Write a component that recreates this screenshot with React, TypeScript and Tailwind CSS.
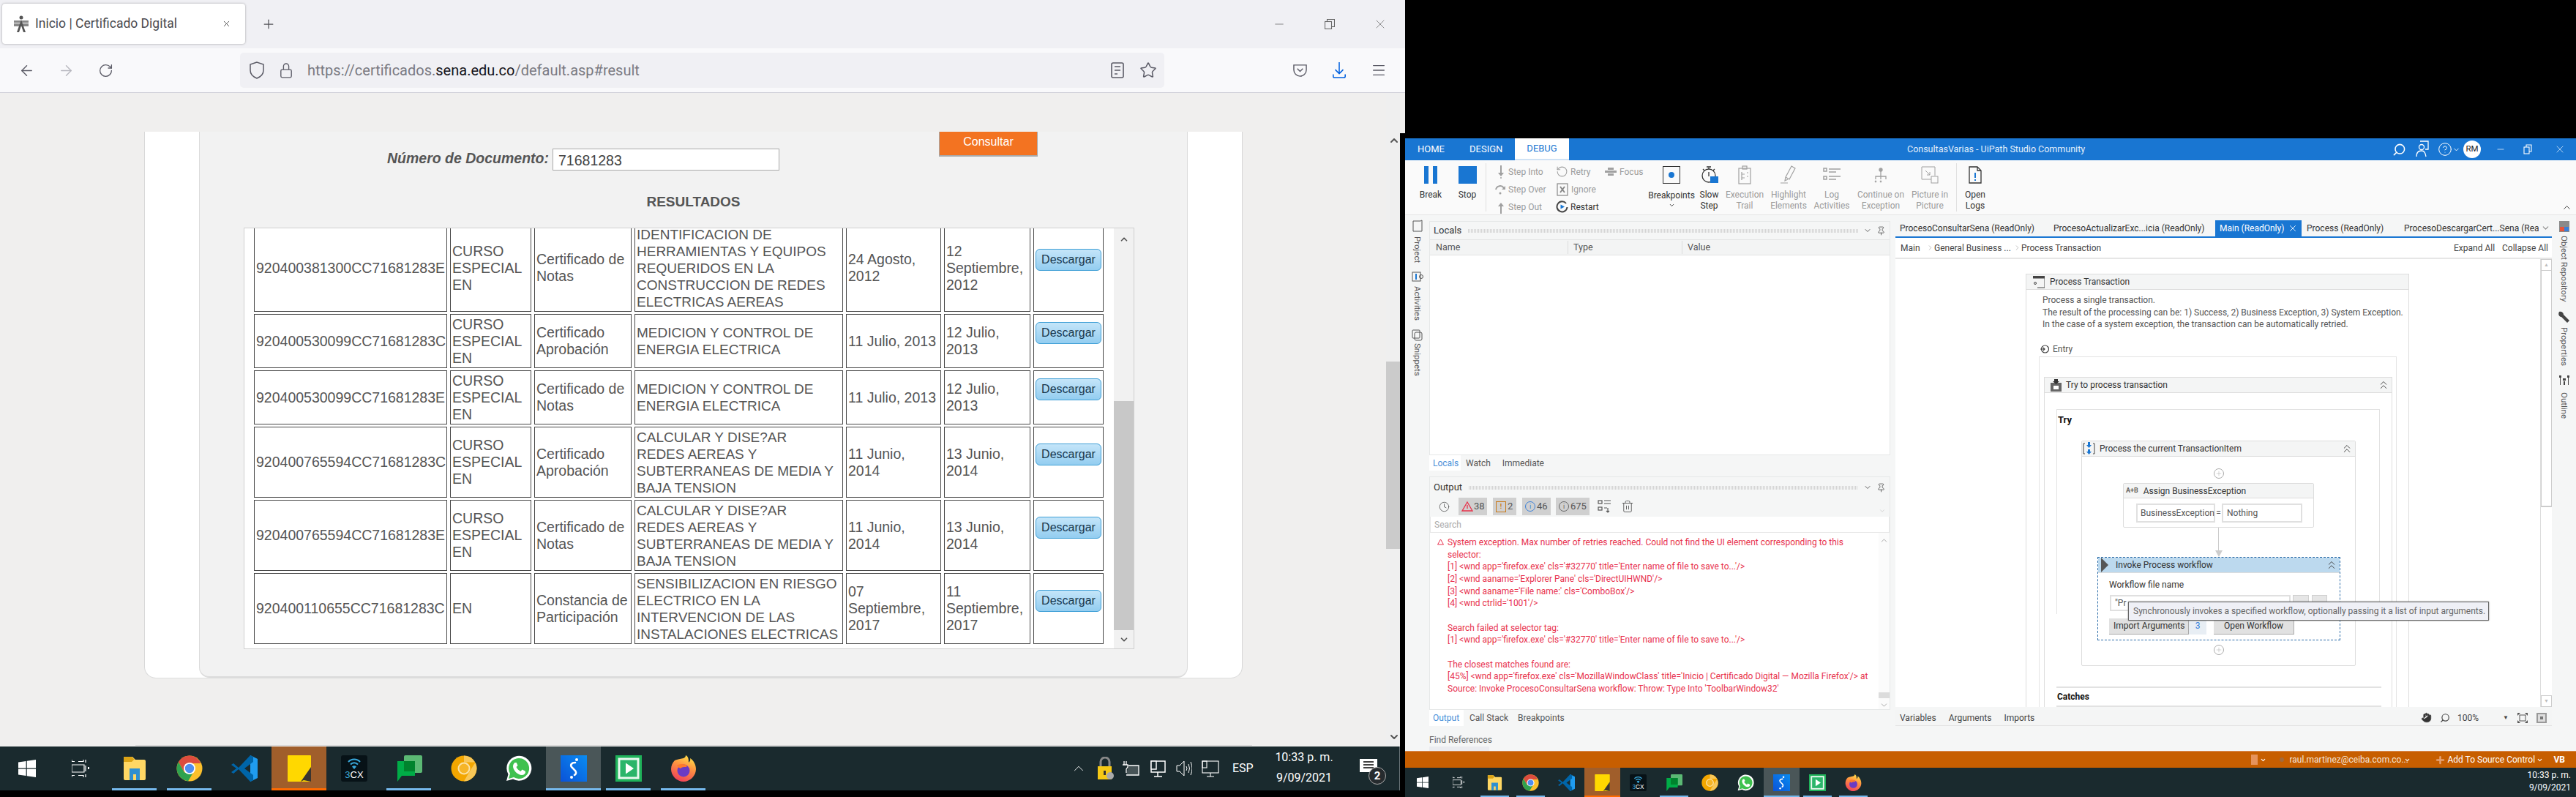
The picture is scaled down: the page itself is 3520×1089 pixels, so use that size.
import React from "react";
import { ChevronUp, ChevronDown, ArrowLeft, ArrowRight, RotateCw, Star, Plus, X, Minus, Menu, Search, HelpCircle, Clock, Trash2, Pin, Hand, ChevronRight, ChevronsUp } from "lucide-react";

/* ---------- task bar icons ---------- */
const Svg = ({ s, children }: { s: number; children: React.ReactNode }) => (
  <svg width={s} height={s} viewBox="0 0 36 36">{children}</svg>
);
const IWin = ({ s }: { s: number }) => (
  <svg width={s} height={s} viewBox="0 0 24 24" fill="#fff"><path d="M0 3.4 10.6 2v9.6H0zM11.8 1.8 24 0v11.6H11.8zM0 12.8h10.6V22L0 20.6zM11.8 12.8H24V24l-12.2-1.8z" /></svg>
);
const ITask = ({ s }: { s: number }) => (
  <svg width={s} height={s} viewBox="0 0 24 24" fill="none" stroke="#fff" strokeWidth="1.2"><path d="M0 2.5h4M9 2.5h7M19 0v4M0 7h17v10H0zM0 21.5h4M9 21.5h7M19 8v8M19 20v4M0 0v3M16 0v3M0 21v3M16 21v3" /><rect x="22" y="10" width="2" height="3" fill="#fff" stroke="none" /></svg>
);
const IFolder = ({ s }: { s: number }) => (
  <Svg s={s}><path d="M3 2h12l4 4H31q2 0 2 2v24q0 2-2 2H5q-2 0-2-2z" fill="#ffd764" /><path d="M3 2h11l4 4h-1l-3 3H3z" fill="#dca416" /><path d="M11 18h14v16h-5v-8h-4v8h-5z" fill="#2f8fd0" /></Svg>
);
const IChrome = ({ s, amber }: { s: number; amber?: boolean }) =>
  amber ? (
    <Svg s={s}><circle cx="18" cy="18" r="17.5" fill="#f3a600" /><path d="M18 .5a17.5 17.5 0 0 1 15 9H18zM33.5 10A17.5 17.5 0 0 1 18 35.5l8-14z" fill="#f8c757" /><circle cx="18" cy="18" r="7.5" fill="#f6b527" stroke="#fbe2a6" strokeWidth="2" /></Svg>
  ) : (
    <Svg s={s}><circle cx="18" cy="18" r="17.5" fill="#fbc02d" /><path d="M18 .5A17.5 17.5 0 0 0 2.9 9.3l7.5 13L18 11h15.2A17.5 17.5 0 0 0 18 .5z" fill="#dc4c3e" /><path d="M2.9 9.3A17.5 17.5 0 0 0 16 35.4l7-12H11z" fill="#2fa24f" /><circle cx="18" cy="18" r="8" fill="#fff" /><circle cx="18" cy="18" r="6.2" fill="#4f8ef0" /></Svg>
  );
const IVs = ({ s }: { s: number }) => (
  <Svg s={s}><path d="M26 0 36 5v26l-10 5V0z" fill="#1f9cf0" /><path d="M26 0 10 17 3 11 0 13l7 5-7 5 3 2 7-6 16 17 4-2V27l-12-9L30 9V2z" fill="#0065a9" /></Svg>
);
const ISticky = ({ s }: { s: number }) => (
  <Svg s={s}><rect x="2" width="32" height="36" fill="#ffd800" rx="1" /><path d="M34 16v20H20z" fill="#3a3530" /><path d="M34 36H20l4-2z" fill="#ffd800" /></Svg>
);
const I3cx = ({ s }: { s: number }) => (
  <Svg s={s}>
    <rect width="36" height="36" rx="3" fill="#071217" />
    <path d="M10 9a11 11 0 0 1 16 0M13 12.500a6.500 6.500 0 0 1 10 0" fill="none" stroke="#39a9dc" strokeWidth="2" />
    <path d="M15 15.500 18 19l3-3.500a4 4 0 0 0-6 0z" fill="#39a9dc" />
    <text x="18" y="31" fontSize="13" textAnchor="middle" fill="#fff" fontFamily="Liberation Sans"><tspan fill="#39a9dc">3</tspan>CX</text>
  </Svg>
);
const IChat = ({ s }: { s: number }) => (
  <Svg s={s}><rect x="11" width="25" height="24" rx="2" fill="#5bb974" /><path d="M2 8h24v20H8l-6 8z" fill="#00ac47" /><rect x="11" y="8" width="15" height="14" fill="#00832d" /></Svg>
);
const IWa = ({ s }: { s: number }) => (
  <Svg s={s}><path d="M1 35l2.500-9A17 17 0 1 1 10 32.500z" fill="#fff" /><path d="M4 32l2-7A14 14 0 1 1 11 30z" fill="#3fc14f" /><path d="M13 10c-1 0-3 2-3 5 0 5 6 12 12 12 3 0 5-2 5-4l-.5-1.500-4-2-2 2.500c-2-.7-5-3.500-6-6l2-2-1.800-4z" fill="#fff" /></Svg>
);
const IUi = ({ s }: { s: number }) => (
  <Svg s={s}>
    <defs><linearGradient id="ug" x1="0" y1="1" x2="1" y2="0"><stop offset="0" stopColor="#0a52d8" /><stop offset="1" stopColor="#0a8cf0" /></linearGradient></defs>
    <rect width="36" height="36" fill="url(#ug)" />
    <path d="M20 10c-5 0-7 3-5 6l5 5c2 3 1 5-1 6" fill="none" stroke="#fff" strokeWidth="2.600" strokeLinecap="round" />
    <circle cx="22" cy="6" r="2" fill="#fff" /><circle cx="15" cy="30" r="2" fill="#fff" />
  </Svg>
);
const IPlay = ({ s }: { s: number }) => (
  <Svg s={s}><rect width="36" height="36" fill="#1fb25a" /><rect x="3.500" y="3.500" width="29" height="29" fill="#e9f8ef" /><rect x="6.500" y="6.500" width="23" height="23" fill="#2bb56a" /><path d="M14 10.500 25 18l-11 7.500z" fill="#fff" /></Svg>
);
const IFox = ({ s }: { s: number }) => (
  <svg width={s} height={s} viewBox="0 0 36 36">
    <defs><linearGradient id="fx" x1="0.700" y1="0" x2="0.300" y2="1"><stop offset="0" stopColor="#ffe24a" /><stop offset="0.400" stopColor="#ff9640" /><stop offset="1" stopColor="#f03e5a" /></linearGradient></defs>
    <path d="M18 4C13 5 8 6 6 7 3 10 1 14 1 19c0 9 8 17 17 17s17-8 17-17c0-6-3-12-8-15 1 3-1 5-2 6 0-4 0-8-4-10 0 2-1 3-3 4z" fill="url(#fx)" />
    <circle cx="18" cy="21" r="8.500" fill="#6b3bc4" />
    <path d="M9 14c3-2 7-3 12-1 2 1 2 3 0 3-3 0-5 0-7 2-2-1-4-2-5-4z" fill="#ff7a2a" />
  </svg>
);

type Tile = { k: string; I: React.FC<{ s: number }>; bar?: boolean; bg?: string; hot?: boolean };
const tiles: Tile[] = [
  { k: "folder", I: IFolder, bar: true },
  { k: "chrome", I: ({ s }) => <IChrome s={s} />, bar: true },
  { k: "vs", I: IVs },
  { k: "sticky", I: ISticky, hot: true },
  { k: "3cx", I: I3cx },
  { k: "chat", I: IChat, bar: true },
  { k: "amber", I: ({ s }) => <IChrome s={s} amber /> },
  { k: "wa", I: IWa },
  { k: "ui", I: IUi, bar: true, bg: "bg-[#4a5658]" },
  { k: "play", I: IPlay, bar: true },
  { k: "fox", I: IFox, bar: true },
];

/* ---------- browser ---------- */
const rows = [
  { h: "h-[120px]", id: "920400381300CC71681283E", a: ["CURSO", "ESPECIAL", "EN"], b: ["Certificado de", "Notas"], c: ["IDENTIFICACION DE", "HERRAMIENTAS Y EQUIPOS", "REQUERIDOS EN LA", "CONSTRUCCION DE REDES", "ELECTRICAS AEREAS"], d: ["24 Agosto,", "2012"], e: ["12", "Septiembre,", "2012"] },
  { h: "h-[74px]", id: "920400530099CC71681283C", a: ["CURSO", "ESPECIAL", "EN"], b: ["Certificado", "Aprobación"], c: ["MEDICION Y CONTROL DE", "ENERGIA ELECTRICA"], d: ["11 Julio, 2013"], e: ["12 Julio,", "2013"] },
  { h: "h-[74px]", id: "920400530099CC71681283E", a: ["CURSO", "ESPECIAL", "EN"], b: ["Certificado de", "Notas"], c: ["MEDICION Y CONTROL DE", "ENERGIA ELECTRICA"], d: ["11 Julio, 2013"], e: ["12 Julio,", "2013"] },
  { h: "h-[97px]", id: "920400765594CC71681283C", a: ["CURSO", "ESPECIAL", "EN"], b: ["Certificado", "Aprobación"], c: ["CALCULAR Y DISE?AR", "REDES AEREAS Y", "SUBTERRANEAS DE MEDIA Y", "BAJA TENSION"], d: ["11 Junio,", "2014"], e: ["13 Junio,", "2014"] },
  { h: "h-[97px]", id: "920400765594CC71681283E", a: ["CURSO", "ESPECIAL", "EN"], b: ["Certificado de", "Notas"], c: ["CALCULAR Y DISE?AR", "REDES AEREAS Y", "SUBTERRANEAS DE MEDIA Y", "BAJA TENSION"], d: ["11 Junio,", "2014"], e: ["13 Junio,", "2014"] },
  { h: "h-[97px]", id: "920400110655CC71681283C", a: ["EN"], b: ["Constancia de", "Participación"], c: ["SENSIBILIZACION EN RIESGO", "ELECTRICO EN LA", "INTERVENCION DE LAS", "INSTALACIONES ELECTRICAS"], d: ["07", "Septiembre,", "2017"], e: ["11", "Septiembre,", "2017"] },
];

const Cell = ({ l, cls }: { l: string[]; cls?: string }) => (
  <td className={`border border-[#484848] px-[2px] py-0 align-middle whitespace-nowrap overflow-hidden ${cls || ""}`}>
    {l.map((t, i) => (<div key={i}>{t}</div>))}
  </td>
);

function Browser() {
  return (
    <div className="w-[1920px] flex flex-col shrink-0 font-['Roboto',sans-serif]">
      <div className="h-[66px] bg-[#f0f0f4] flex items-start">
        <div className="ml-[3px] mt-[5px] w-[332px] h-[55px] bg-white rounded-[4px] shadow-[0_0_3px_rgba(0,0,0,0.35)] flex items-center text-[#4a4a4f] text-[17.500px]">
          <svg className="ml-[14px] mr-[7px]" width="24" height="24" viewBox="0 0 24 24" fill="#555"><circle cx="12" cy="3" r="2.500" /><path d="M2 7h20v3H2zM2 11h20v4H2z" opacity=".7" /><path d="M12 6 6 23h3l3-9 3 9h3z" /></svg>
          <span className="whitespace-nowrap">Inicio | Certificado Digital</span>
          <X className="ml-auto mr-[19px] text-[#333]" size={13} strokeWidth={1.500} />
        </div>
        <div className="w-[64px] h-[66px] flex items-center justify-center text-[#55555a]"><Plus size={20} strokeWidth={1.500} /></div>
        <div className="ml-auto flex text-[#666]">
          <div className="w-[69px] h-[66px] flex items-center justify-center"><Minus size={18} strokeWidth={1} /></div>
          <div className="w-[69px] h-[66px] flex items-center justify-center">
            <svg width="14" height="14" viewBox="0 0 14 14" fill="none" stroke="#666" strokeWidth="1.100"><rect x="0.500" y="3.500" width="9" height="10" /><path d="M3.500 3.500v-3h10v10h-4" /></svg>
          </div>
          <div className="w-[69px] h-[66px] flex items-center justify-center"><X size={20} strokeWidth={0.900} /></div>
        </div>
      </div>
      <div className="h-[61px] bg-[#f9f9fb] border-b border-[#cfcfd8] flex items-center pl-[9px] text-[#5b5b66]">
        <div className="w-[54px] flex justify-center"><ArrowLeft size={23} strokeWidth={1.500} /></div>
        <div className="w-[54px] flex justify-center text-[#b8b8bf]"><ArrowRight size={23} strokeWidth={1.500} /></div>
        <div className="w-[54px] flex justify-center"><RotateCw size={21} strokeWidth={1.500} /></div>
        <div className="ml-[157px] w-[1263px] h-[48px] bg-[#f0f0f4] rounded-[5px] flex items-center">
          <svg className="ml-[12px]" width="22" height="24" viewBox="0 0 22 24" fill="none" stroke="#5b5b66" strokeWidth="1.500"><path d="M11 1 2 4v8c0 5 4 9 9 11 5-2 9-6 9-11V4z" /></svg>
          <svg className="ml-[20px]" width="18" height="24" viewBox="0 0 20 24" fill="none" stroke="#5b5b66" strokeWidth="1.500"><path d="M6 11V6a4 4 0 0 1 8 0v5" /><rect x="2" y="11" width="16" height="12" rx="2" /></svg>
          <span className="ml-[20px] text-[20px] text-[#7a7a82] whitespace-nowrap">https://certificados.<span className="text-[#15141a]">sena.edu.co</span>/default.asp#result</span>
          <svg className="ml-auto" width="18" height="22" viewBox="0 0 18 22" fill="none" stroke="#5b5b66" strokeWidth="1.600"><rect x="1" y="1" width="16" height="20" rx="2" /><path d="M5 6h8M5 11h8M5 16h4" /></svg>
          <Star className="ml-[21px] mr-[10px]" size={24} strokeWidth={1.500} />
        </div>
        <div className="ml-[158px] w-[54px] flex justify-center">
          <svg width="21" height="19" viewBox="0 0 22 20" fill="none" stroke="#5b5b66" strokeWidth="1.500"><path d="M2 2h18v7a9 9 0 0 1-18 0z" /><path d="m7 7 4 4 4-4" /></svg>
        </div>
        <div className="w-[54px] flex justify-center">
          <svg width="20" height="24" viewBox="0 0 22 26" fill="none" stroke="#0060df" strokeWidth="1.700"><path d="M11 1v17M5 12l6 6 6-6M2 19v3a2 2 0 0 0 2 2h14a2 2 0 0 0 2-2v-3" /></svg>
        </div>
        <div className="w-[54px] flex justify-center"><Menu size={22} strokeWidth={1.500} /></div>
      </div>
      <div className="h-[893px] bg-[#f0efee] flex">
        <div className="w-[1894px] shrink-0 font-['Liberation_Sans',sans-serif] text-[19.500px] leading-[23px] text-[#555]">
          <div className="mt-[53px] ml-[197px] w-[1501px] h-[747px] bg-white rounded-b-[16px] border-b border-[#ddd] px-[74px] border-x border-x-[#d8d8d8]">
            <div className="h-[746px] bg-[#f2f2f2] rounded-b-[14px] border-x border-b-2 border-[#dcdcdc]">
              <div className="flex items-start pl-[256px] h-[53px]">
                <span className="mt-[25px] w-[220px] font-bold italic whitespace-nowrap">Número de Documento:</span>
                <div className="ml-[6px] mt-[23px] w-[310px] h-[30px] bg-white border border-[#aaa] pl-[7px] leading-[30px] text-[#444]">71681283</div>
                <div className="ml-[218px] w-[135px] h-[34px] bg-[#f37321] border-b-2 border-r border-l border-[#a9a9a9] border-t-0 text-white text-center text-[16px] leading-[28px]">Consultar</div>
              </div>
              <div className="mt-[32px] text-center font-bold text-[19px] leading-[22px]">RESULTADOS</div>
              <div className="mt-[24px] ml-[60px] w-[1217px] h-[576px] bg-white border border-[#d0d0d0] flex overflow-hidden">
                <div className="w-[1188px] pl-[9px] overflow-hidden shrink-0">
                  <table className="w-[1169px] table-fixed border-separate [border-spacing:4px_3px] -mt-[9px]">
                    <colgroup>
                      <col className="w-[264px]" /><col className="w-[111px]" /><col className="w-[133px]" /><col className="w-[285px]" /><col className="w-[130px]" /><col className="w-[118px]" /><col className="w-[96px]" />
                    </colgroup>
                    <tbody>
                      {rows.map((r, i) => (
                        <tr key={i} className={r.h}>
                          <Cell l={[r.id]} /><Cell l={r.a} /><Cell l={r.b} /><Cell l={r.c} cls="text-[19px]" /><Cell l={r.d} /><Cell l={r.e} />
                          <td className="border border-[#484848] p-0 align-middle">
                            <div className="mx-auto mb-[22px] w-[90px] h-[30px] rounded-[6px] border border-[#3f9fd6] bg-gradient-to-b from-[#c4e5f9] to-[#93cdf0] text-[#17384f] text-[16px] leading-[28px] text-center">Descargar</div>
                          </td>
                        </tr>
                      ))}
                    </tbody>
                  </table>
                </div>
                <div className="w-[28px] bg-[#f1f1f1] flex flex-col items-center shrink-0 text-[#555]">
                  <ChevronUp className="mt-[8px] shrink-0" size={14} strokeWidth={3} />
                  <div className="mt-[214px] w-full h-[313px] bg-[#c8c8c8] shrink-0" />
                  <ChevronDown className="mt-[6px] shrink-0" size={14} strokeWidth={3} />
                </div>
              </div>
            </div>
          </div>
          <div className="mt-[91px] ml-[185px] w-[1526px] border-t border-[#d5d5d5]" />
        </div>
        <div className="w-[19px] bg-[#efefef] flex flex-col items-end shrink-0 text-[#555]">
          <ChevronUp className="mt-[57px] shrink-0" size={16} strokeWidth={3} />
          <div className="mt-[294px] w-full h-[256px] bg-[#cbcbcb] shrink-0" />
          <ChevronDown className="mt-[249px] shrink-0" size={16} strokeWidth={3} />
        </div>
        <div className="mt-[55px] w-[7px] bg-black" />
      </div>
      <div className="flex h-[60px] w-[1913px] bg-[#1a2a2e] border-r border-[#6a7478]">
        <div className="w-[73px] flex items-center justify-center"><IWin s={24} /></div>
        <div className="w-[73px] flex items-center justify-center"><ITask s={24} /></div>
        {tiles.map((t) => (
          <div key={t.k} className={`relative w-[75px] flex items-center justify-center ${t.hot ? "bg-[#a05e2b]" : t.bg || ""}`}>
            <t.I s={36} />
            {t.bar && <div className={`absolute bottom-0 h-[3px] bg-[#76b9ed] ${t.bg ? "inset-x-0" : "inset-x-[7px]"}`} />}
            {t.hot && <div className="absolute inset-x-0 bottom-0 h-[3px] bg-[#ff6a00]" />}
          </div>
        ))}
        <div className="ml-auto flex items-center text-white font-['Roboto',sans-serif]">
          <ChevronUp size={22} strokeWidth={1} />
          <svg className="ml-[14px]" width="23" height="32" viewBox="0 0 23 32"><path d="M5 14V7a6 6 0 0 1 12 0v7" fill="none" stroke="#888" strokeWidth="3" /><rect x="1" y="13" width="19" height="18" fill="#f6c915" /><rect x="9" y="19" width="3" height="6" fill="#333" /><circle cx="18" cy="26" r="5" fill="#aaa" /></svg>
          <svg className="ml-[12px]" width="24" height="20" viewBox="0 0 24 20" fill="none" stroke="#fff" strokeWidth="1.300"><path d="M2 0v5M5 0v5M0 5h7v3l-2 3v5" /><path d="M8 6h14v13H5" fill="#fff" fillOpacity=".2" /></svg>
          <svg className="ml-[14px]" width="21" height="26" viewBox="0 0 21 26" fill="none" stroke="#fff" strokeWidth="1.500"><rect x="1" y="3" width="19" height="15" /><rect x="1" y="3" width="7" height="11" fill="#1a2a2e" /><path d="M10 18v6M5 24h11" /></svg>
          <svg className="ml-[14px]" width="22" height="24" viewBox="0 0 22 24" fill="none" stroke="#fff" strokeWidth="1"><path d="M1 8h4l6-6v20l-6-6H1zM14 9q2 3 0 6M17 6q3 6 0 12M20 3q4 9 0 18" /></svg>
          <svg className="ml-[13px]" width="24" height="24" viewBox="0 0 24 24" fill="none" stroke="#fff" strokeWidth="1.100"><rect x="1" y="2" width="22" height="16" /><rect x="1" y="2" width="6" height="9" /><path d="M12 18v5M7 23h10" /></svg>
          <span className="ml-[18px] text-[16px] w-[48px]">ESP</span>
          <div className="w-[100px] text-[16px] text-center leading-[28px] mt-[-2px]"><div>10:33 p. m.</div><div>9/09/2021</div></div>
          <div className="relative ml-[26px] mr-[30px] w-[24px] h-[18px] bg-white mt-[-8px]">
            <div className="mx-[5px] mt-[3px] h-[1.500px] bg-[#444]" /><div className="mx-[5px] mt-[2.500px] h-[1.500px] bg-[#444]" /><div className="mx-[5px] mt-[2.500px] h-[1.500px] bg-[#444]" />
            <div className="absolute left-[12px] top-[11px] w-[24px] h-[24px] rounded-full bg-[#262b2e] border border-[#aaa] text-white text-[15px] font-bold text-center leading-[22px]">2</div>
          </div>
        </div>
      </div>
    </div>
  );
}

/* ---------- UiPath ---------- */
const RBtn = ({ w, icon, lines, off, shift }: { w: string; icon: React.ReactNode; lines: string[]; off?: boolean; shift?: boolean }) => (
  <div className={`${w} shrink-0 flex flex-col items-center pt-[8px] text-center leading-[15px] whitespace-nowrap ${off ? "text-[#9a9a9a]" : "text-[#333]"}`}>
    <div className="h-[24px] flex items-center justify-center">{icon}</div>
    <div className={shift ? "mt-[9px]" : "mt-[8px]"}>{lines.map((l) => (<div key={l}>{l}</div>))}</div>
    {shift && <ChevronDown className="mt-[1px] text-[#333]" size={9} strokeWidth={2.500} />}
  </div>
);
const G = "#a0a0a0";
const StepRow = ({ icon, label, off = true, cls }: { icon: React.ReactNode; label: string; off?: boolean; cls: string }) => (
  <div className={`${cls} h-[24px] flex items-center whitespace-nowrap ${off ? "text-[#9a9a9a]" : "text-[#333]"}`}>{icon}{label}</div>
);
const Grip = () => (
  <div className="flex-1 h-[5px] bg-[repeating-linear-gradient(90deg,#d4d4d4_0,#d4d4d4_1px,transparent_1px,transparent_2px)]" />
);
const logLines = [
  "System exception. Max number of retries reached. Could not find the UI element corresponding to this",
  "selector:",
  "[1] <wnd app='firefox.exe' cls='#32770' title='Enter name of file to save to...'/>",
  "[2] <wnd aaname='Explorer Pane' cls='DirectUIHWND'/>",
  "[3] <wnd aaname='File name:' cls='ComboBox'/>",
  "[4] <wnd ctrlid='1001'/>",
  "\u00a0",
  "Search failed at selector tag:",
  "[1] <wnd app='firefox.exe' cls='#32770' title='Enter name of file to save to...'/>",
  "\u00a0",
  "The closest matches found are:",
  "[45%] <wnd app='firefox.exe' cls='MozillaWindowClass' title='Inicio | Certificado Digital — Mozilla Firefox'/> at",
  "Source: Invoke ProcesoConsultarSena workflow: Throw: Type Into 'ToolbarWindow32'",
];
const Head = ({ cls, bg, icon, t, chev = true }: { cls?: string; bg?: string; icon: React.ReactNode; t: string; chev?: boolean }) => (
  <div className={`flex items-center h-[21px] border-b border-[#ddd] ${bg || "bg-[#f4f5f5]"} ${cls || ""} text-[#333]`}>
    {icon}<span className="whitespace-nowrap">{t}</span>
    {chev && <ChevronsUp className="ml-auto mr-[2px] text-[#444]" size={18} strokeWidth={1.300} />}
  </div>
);
const PlusC = () => (
  <div className="mx-auto w-[14px] h-[14px] rounded-full border border-[#aaa] flex items-center justify-center text-[#999]"><Plus size={10} strokeWidth={1} /></div>
);
const DocTab = ({ w, t, cls }: { w: string; t: string; cls?: string }) => (
  <div className={`${w} h-[22px] flex items-center overflow-hidden whitespace-nowrap text-[#333] ${cls || ""}`}>{t}</div>
);
const Vert = ({ t, cls }: { t: string; cls?: string }) => (
  <div className={`[writing-mode:vertical-rl] whitespace-nowrap text-[#555] text-[11.500px] leading-[14px] ${cls || ""}`}>{t}</div>
);

function Studio() {
  return (
    <div className="w-[1600px] shrink-0 flex flex-col pt-[189px] font-['Roboto',sans-serif] text-[12px]">
      <div className="h-[30px] bg-[#1976d2] flex text-white text-[13px] items-stretch shrink-0">
        <div className="w-[88px] pl-[17px] flex items-center">HOME</div>
        <div className="w-[62px] flex items-center">DESIGN</div>
        <div className="w-[74px] bg-white text-[#1976d2] flex items-center justify-center border-b-2 border-[#cfe2f5]">DEBUG</div>
        <div className="ml-[462px] flex items-center text-[#e3eefa] whitespace-nowrap text-[12.500px]">ConsultasVarias - UiPath Studio Community</div>
        <div className="ml-auto flex items-center">
          <Search size={19} strokeWidth={2} className="-scale-x-100 mr-[13px]" />
          <svg className="mr-[12px]" width="18" height="24" viewBox="0 0 18 24" fill="none" stroke="#fff" strokeWidth="1.300"><path d="M6 1h11v11h-4" /><circle cx="8" cy="9" r="3.500" /><path d="M1 22c0-6 3-8 7-8s5 3 6 8" /></svg>
          <HelpCircle size={20} strokeWidth={1.200} />
          <ChevronDown size={11} strokeWidth={2} className="mr-[4px]" />
          <div className="w-[24px] h-[24px] rounded-full bg-white text-[#222] text-[11.500px] flex items-center justify-center">RM</div>
          <Minus className="ml-[20px]" size={14} strokeWidth={1.200} />
          <svg className="ml-[24px]" width="12" height="14" viewBox="0 0 12 14" fill="none" stroke="#fff" strokeWidth="1.100"><rect x="1" y="4" width="7" height="9" /><path d="M4 4V1h7v9H8" /></svg>
          <X className="ml-[30px] mr-[14px]" size={16} strokeWidth={1} />
        </div>
      </div>
      {/* ribbon */}
      <div className="h-[75px] bg-[#fafafa] flex items-stretch shrink-0 border-b border-[#e6e6e6] relative">
        <RBtn w="w-[70px]" lines={["Break"]} icon={<div className="flex gap-[6px]"><div className="w-[6px] h-[24px] bg-[#1976d2]" /><div className="w-[6px] h-[24px] bg-[#1976d2]" /></div>} />
        <RBtn w="w-[30px]" lines={["Stop"]} icon={<div className="w-[25px] h-[24px] bg-[#1976d2]" />} />
        <div className="ml-[10px] my-[4px] border-l border-[#e0e0e0] pl-[12px] w-[223px] grid grid-cols-[84px_66px_auto] content-center pt-[5px]">
          <StepRow cls="" label="Step Into" icon={<svg className="mr-[6px] ml-[4px]" width="8" height="18" viewBox="0 0 8 18" fill={G}><path d="M3 0h2v10h3l-4 5-4-5h3z" /><circle cx="4" cy="17" r="1" /></svg>} />
          <StepRow cls="" label="Retry" icon={<RotateCw className="mr-[3px] -scale-x-100 -ml-[1px]" size={17} strokeWidth={1.500} color={G} />} />
          <StepRow cls="" label="Focus" icon={<svg className="mr-[4px]" width="16" height="12" viewBox="0 0 16 12" fill={G}><rect x="4" width="8" height="3" /><rect y="4" width="16" height="3" /><rect x="4" y="8" width="8" height="3" /></svg>} />
          <StepRow cls="" label="Step Over" icon={<svg className="mr-[3px] -ml-[1px]" width="16" height="16" viewBox="0 0 16 16" fill="none" stroke={G} strokeWidth="2"><path d="M2 8a6 6 0 0 1 11-2" /><path d="M15 3v5h-5z" fill={G} stroke="none" /><circle cx="8" cy="13" r="1.500" fill={G} stroke="none" /></svg>} />
          <StepRow cls="col-span-2" label="Ignore" icon={<svg className="mr-[4px]" width="16" height="22" viewBox="0 0 16 22" fill="none" stroke="#888" strokeWidth="1.200"><rect x="1" y="3" width="14" height="16" /><path d="m5 7 6 8M11 7l-6 8" strokeWidth="2" /></svg>} />
          <StepRow cls="" label="Step Out" icon={<svg className="mr-[6px] ml-[4px]" width="8" height="18" viewBox="0 0 8 18" fill={G}><path d="M3 18h2V8h3L4 3 0 8h3z" /></svg>} />
          <StepRow cls="col-span-2" off={false} label="Restart" icon={<svg className="mr-[3px] -ml-[1px]" width="17" height="17" viewBox="0 0 17 17" fill="none" stroke="#444" strokeWidth="2"><path d="M14 4a7 7 0 1 0 1.500 5" /><path d="M6.500 5.500 12 8.500 6.500 11.500z" fill="#1976d2" stroke="none" /></svg>} />
        </div>
        <RBtn w="w-[62px]" shift lines={["Breakpoints"]} icon={<div className="w-[24px] h-[24px] border border-[#333] flex items-center justify-center"><div className="w-[8px] h-[8px] rounded-full bg-[#1976d2]" /></div>} />
        <RBtn w="w-[41px]" lines={["Slow", "Step"]} icon={<svg width="24" height="26" viewBox="0 0 24 26" fill="none" stroke="#333" strokeWidth="1.300"><circle cx="11" cy="14" r="9" /><path d="M8 2h6M11 3v2M3 5l2 2M19 5l-2 2M11 9v6" /><rect x="13" y="15" width="11" height="9" fill="#1976d2" stroke="none" /></svg>} />
        <RBtn w="w-[56px]" off lines={["Execution", "Trail"]} icon={<svg width="18" height="26" viewBox="0 0 18 26" fill="none" stroke={G} strokeWidth="1.200"><rect x="1" y="4" width="16" height="21" /><rect x="6" y="1" width="6" height="4" /><path d="M5 9v11M5 12h4M5 17h4M12 10h2M12 15h2" /></svg>} />
        <RBtn w="w-[64px]" off lines={["Highlight", "Elements"]} icon={<svg width="24" height="26" viewBox="0 0 24 26" fill="none" stroke={G} strokeWidth="1.200"><path d="M16 1l5 3-8 15-5-3zM8 16l-1 5 4-2M1 24h10" /></svg>} />
        <RBtn w="w-[54px]" off lines={["Log", "Activities"]} icon={<svg width="24" height="20" viewBox="0 0 24 20" fill="none" stroke={G} strokeWidth="1.500"><path d="M8 2h16M8 6h10M8 12h16M8 16h10" /><rect x="1" y="1" width="4" height="4" /><rect x="1" y="12" width="4" height="4" /></svg>} />
        <RBtn w="w-[80px]" off lines={["Continue on", "Exception"]} icon={<svg width="18" height="24" viewBox="0 0 18 24" fill="none" stroke={G} strokeWidth="1.300"><circle cx="9" cy="5" r="2" fill={G} /><path d="M9 7v7M2 18v-4h14v4M9 14v4M1 20l2 2M3 20l-2 2M8 20l2 2M10 20l-2 2" /></svg>} />
        <RBtn w="w-[54px]" off lines={["Picture in", "Picture"]} icon={<svg width="24" height="24" viewBox="0 0 24 24" fill="none" stroke={G} strokeWidth="1"><path d="M14 18H1V1h18v12" /><rect x="14" y="14" width="9" height="9" /><path d="m6 6 6 6M12 8v4H8" /></svg>} />
        <div className="ml-[9px] my-[4px] border-l border-[#e0e0e0]" />
        <RBtn w="w-[50px]" lines={["Open", "Logs"]} icon={<svg width="18" height="24" viewBox="0 0 18 24" fill="none" stroke="#333" strokeWidth="1.300"><path d="M1 1h11l5 5v17H1z" /><path d="M12 1v5h5" /><path d="M9 9v7M9 18v2" stroke="#1976d2" strokeWidth="2" /></svg>} />
        <ChevronUp className="absolute right-[5px] bottom-[2px] text-[#333]" size={15} strokeWidth={1.500} />
      </div>
      {/* main */}
      <div className="h-[732px] bg-[#f5f6f6] flex shrink-0">
        <div className="w-[33px] shrink-0 flex flex-col items-center pt-[6px]">
          <svg width="14" height="18" viewBox="0 0 14 18" fill="none" stroke="#555"><path d="M1 2h10l2-1v15H1z" /></svg>
          <Vert t="Project" cls="mt-[5px]" />
          <svg className="mt-[12px]" width="16" height="14" viewBox="0 0 16 14" fill="none" stroke="#555"><rect x="1" y="1" width="11" height="12" /><path d="M6 3v8" stroke="#1976d2" strokeWidth="2" /><circle cx="13" cy="7" r="2.500" /></svg>
          <Vert t="Activities" cls="mt-[6px]" />
          <svg className="mt-[12px]" width="16" height="17" viewBox="0 0 16 17" fill="none" stroke="#555"><rect x="1" y="1" width="10" height="11" rx="1" /><rect x="4" y="4" width="10" height="11" rx="2" /></svg>
          <Vert t="Snippets" cls="mt-[2px]" />
        </div>
        <div className="w-[630px] shrink-0 flex flex-col pt-[8px]">
          <div className="h-[320px] bg-white border border-[#e6e8e8] flex flex-col shrink-0">
            <div className="h-[24px] bg-[#f5f6f6] flex items-center pl-[5px] pr-[5px] text-[#333] text-[13px]">
              <span className="mr-[9px]">Locals</span><Grip />
              <ChevronDown className="ml-[7px]" size={12} strokeWidth={1.500} />
              <Pin className="ml-[6px]" size={13} strokeWidth={1.300} />
            </div>
            <div className="h-[22px] bg-[#f3f4f4] border-y border-[#e4e4e4] flex items-center text-[#555] text-[12.500px]">
              <div className="w-[189px] pl-[8px] border-r border-[#dcdcdc]">Name</div>
              <div className="w-[156px] pl-[7px] border-r border-[#dcdcdc]">Type</div>
              <div className="pl-[7px]">Value</div>
            </div>
          </div>
          <div className="h-[21px] flex text-[#555] items-center shrink-0">
            <div className="w-[43px] h-full bg-white pl-[5px] flex items-center text-[#4a90d9]">Locals</div>
            <span className="ml-[7px]">Watch</span><span className="ml-[16px]">Immediate</span>
          </div>
          <div className="mt-[8px] h-[319px] border border-[#e6e8e8] flex flex-col shrink-0 bg-[#f5f6f6]">
            <div className="h-[28px] flex items-center px-[5px] text-[#333] text-[13px] shrink-0">
              <span className="mr-[9px]">Output</span><Grip />
              <ChevronDown className="ml-[7px]" size={12} strokeWidth={1.500} />
              <Pin className="ml-[6px]" size={13} strokeWidth={1.300} />
            </div>
            <div className="h-[24px] flex items-center shrink-0 pl-[12px] text-[#555] text-[13px] relative">
              <Clock size={15} strokeWidth={1.300} />
              <div className="ml-[12px] w-[39px] h-[24px] bg-[#d0d0d0] flex items-center pl-[4px] gap-[1px]"><svg width="16" height="14" viewBox="0 0 16 14" fill="none" stroke="#e8304a" strokeWidth="1.300"><path d="M8 1 15 13H1z" /><path d="M8 5v5" /></svg>38</div>
              <div className="ml-[8px] w-[32px] h-[24px] bg-[#d0d0d0] flex items-center pl-[4px] gap-[2px]"><div className="w-[14px] h-[15px] border border-[#c97a1a] text-[#c97a1a] text-[9px] leading-[13px] text-center font-bold">!</div>2</div>
              <div className="ml-[8px] w-[39px] h-[24px] bg-[#d0d0d0] flex items-center pl-[4px] gap-[2px]"><div className="w-[14px] h-[14px] rounded-full border border-[#3a80d9] text-[#3a80d9] text-[9px] leading-[12px] text-center">i</div>46</div>
              <div className="ml-[7px] w-[46px] h-[24px] bg-[#d0d0d0] flex items-center pl-[4px] gap-[2px]"><div className="w-[14px] h-[14px] rounded-full border border-[#666] text-[#666] text-[9px] leading-[12px] text-center">i</div>675</div>
              <svg className="ml-[11px]" width="20" height="20" viewBox="0 0 20 20" fill="none" stroke="#555" strokeWidth="1.200"><rect x="1" y="2" width="5" height="4" /><rect x="1" y="11" width="5" height="4" /><path d="M9 2h9M9 6h9M9 12h4M14 18v-6M12 16l2 2 2-2" /></svg>
              <Trash2 className="ml-[12px]" size={18} strokeWidth={1.200} />
              <ChevronDown className="absolute right-[5px] bottom-[1px] text-[#ccc]" size={10} />
            </div>
            <div className="mt-[2px] h-[22px] bg-white border-b border-x border-[#e8e8e8] pl-[5px] flex items-center text-[#aaa] shrink-0">Search</div>
            <div className="flex-1 min-h-0 bg-white flex overflow-hidden">
              <div className="flex-1 pl-[10px] pt-[5px] text-[#e8324e] leading-[16.670px] whitespace-nowrap overflow-hidden flex">
                <svg className="mt-[3px] mr-[5px] shrink-0" width="9" height="9" viewBox="0 0 9 9" fill="none" stroke="#e8324e"><path d="M4.500 1 8.500 8H.5z" /></svg>
                <div>{logLines.map((l, i) => (<div key={i}>{l}</div>))}</div>
              </div>
              <div className="w-[15px] shrink-0 flex flex-col items-center text-[#888] bg-[#fbfbfb]">
                <ChevronUp className="mt-[4px] shrink-0" size={13} strokeWidth={1.300} />
                <div className="mt-[201px] w-full h-[8px] bg-[#dcdcdc] shrink-0" />
                <ChevronDown className="mt-[3px] shrink-0" size={13} strokeWidth={1.300} />
              </div>
            </div>
          </div>
          <div className="h-[22px] flex text-[#555] items-center shrink-0">
            <div className="w-[47px] h-full bg-white pl-[5px] flex items-center text-[#4a90d9]">Output</div>
            <span className="ml-[8px]">Call Stack</span><span className="ml-[13px]">Breakpoints</span>
          </div>
          <div className="mt-[11px] text-[#666] leading-[16px] shrink-0">Find References</div>
          <div className="mt-[1px] w-[82px] h-[6px] bg-[#ebecf0] shrink-0" />
        </div>
        <div className="w-[7px] shrink-0" />
        <div className="w-[897px] shrink-0 flex flex-col">
          <div className="h-[31px] pt-[7px] flex items-stretch border-b-2 border-[#1976d2] shrink-0">
            <DocTab w="w-[216px]" cls="pl-[6px]" t="ProcesoConsultarSena (ReadOnly)" />
            <DocTab w="w-[221px]" t="ProcesoActualizarExc...icia (ReadOnly)" />
            <div className="w-[118px] h-[22px] bg-[#1976d2] text-white flex items-center pl-[6px] whitespace-nowrap">Main (ReadOnly)<X className="ml-auto mr-[5px]" size={14} strokeWidth={1.500} /></div>
            <DocTab w="w-[140px]" cls="pl-[7px]" t="Process (ReadOnly)" />
            <DocTab w="w-[184px]" t="ProcesoDescargarCert...Sena (ReadOnly)" />
            <ChevronDown className="ml-[3px] mt-[4px] text-[#888]" size={13} />
          </div>
          <div className="h-[29px] bg-white border-b-2 border-[#e6e6e6] flex items-center text-[#444] pl-[7px] shrink-0">
            <span className="w-[35px]">Main</span>
            <ChevronRight className="w-[11px] text-[#bbb]" size={11} />
            <span className="w-[108px] whitespace-nowrap">General Business ...</span>
            <ChevronRight className="w-[11px] text-[#bbb]" size={11} />
            <span className="whitespace-nowrap">Process Transaction</span>
            <span className="ml-auto">Expand All</span>
            <span className="ml-[10px] mr-[5px]">Collapse All</span>
          </div>
          <div className="h-[612px] bg-white flex relative overflow-hidden shrink-0 text-[#444]">
            <div className="flex-1 pt-[20px] pl-[178px] overflow-hidden">
              <div className="w-[524px] border border-[#ddd] border-b-0 h-[800px]">
                <Head cls="pl-[9px]" chev={false} t="Process Transaction" icon={<svg className="mr-[7px]" width="16" height="17" viewBox="0 0 16 17" fill="none" stroke="#444"><path d="M0 1h16v15H6" /><rect y="0" width="16" height="3" fill="#444" /><circle cx="3" cy="10" r="1.500" /></svg>} />
                <div className="pl-[22px] pt-[6px] leading-[16.670px] text-[#555] whitespace-nowrap">
                  <div>Process a single transaction.</div>
                  <div>The result of the processing can be: 1) Success, 2) Business Exception, 3) System Exception.</div>
                  <div>In the case of a system exception, the transaction can be automatically retried.</div>
                </div>
                <div className="mt-[16px] ml-[19px] h-[17px] flex items-center text-[#555]">
                  <svg className="mr-[5px]" width="12" height="14" viewBox="0 0 12 14" fill="none" stroke="#444" strokeWidth="1.200"><circle cx="6.500" cy="7" r="5" /><path d="M0 7h6M4 5l2 2-2 2" /></svg>Entry
                </div>
                <div className="mt-[2px] ml-[17px] w-[489px] h-[600px] border border-[#e4e4e4] pt-[27px] pl-[6px]">
                  <div className="w-[476px] h-[520px] border border-[#ddd] border-b-0">
                    <Head cls="pl-[8px]" t="Try to process transaction" icon={<svg className="mr-[6px]" width="15" height="17" viewBox="0 0 15 17"><rect y="5" width="15" height="12" fill="#666" /><rect x="4" y="9" width="7" height="5" fill="#fff" /><path d="M5 0h5v3h2L7.500 7 3 3h2z" fill="#333" /></svg>} />
                    <div className="mt-[22px] ml-[16px] w-[442px] h-[280px] border border-[#e2e2e2] border-b-0 border-l-[#e2e2e2]">
                      <div className="font-bold text-[#111] text-[13px] h-[24px] pl-[1px] pt-[5px] leading-[18px]">Try</div>
                      <div className="mt-[18px] ml-[33px] w-[375px] h-[308px] border border-[#ddd] rounded-[2px] bg-white">
                        <Head cls="pl-[1px]" t="Process the current TransactionItem" icon={<svg className="mr-[6px]" width="17" height="18" viewBox="0 0 17 18" fill="none"><path d="M3 2H1v14h2M14 2h2v14h-2" stroke="#444" /><path d="M7 0h3v4h2L8.500 8 5 4h2zM7 10h3v3h2l-3.500 4L5 13h2z" fill="#1976d2" /></svg>} />
                        <div className="mt-[16px]"><PlusC /></div>
                        <div className="mt-[6px] ml-[56px] w-[261px] h-[61px] border border-[#ddd] rounded-[2px]">
                          <div className="h-[20px] flex items-center bg-[#f4f5f5] border-b border-[#ddd] pl-[3px] text-[#333]"><span className="mr-[7px] text-[9px] font-bold text-[#666]">A+B</span>Assign BusinessException</div>
                          <div className="flex items-center pl-[17px] pt-[7px] text-[#555]">
                            <div className="w-[108px] h-[26px] border-2 border-[#e0e0e0] flex items-center pl-[4px]">BusinessException</div>
                            <span className="w-[9px] text-center">=</span>
                            <div className="w-[110px] h-[26px] border-2 border-[#e0e0e0] flex items-center pl-[5px]">Nothing</div>
                          </div>
                        </div>
                        <div className="h-[40px] flex flex-col items-center">
                          <div className="w-px flex-1 bg-[#ccc]" />
                          <div className="w-0 h-0 border-x-[5px] border-x-transparent border-t-[9px] border-t-[#ccc]" />
                        </div>
                        <div className="ml-[21px] w-[332px] h-[114px] border border-dashed border-[#2b6ca8]">
                          <Head bg="bg-[#bcd9ee]" cls="pl-[4px] border-[#9cc3e0]" t="Invoke Process workflow" icon={<div className="mr-[10px] w-0 h-0 border-y-[10px] border-y-transparent border-l-[10px] border-l-[#555]" />} />
                          <div className="pl-[15px] pt-[8px] h-[22px] leading-[16px] text-[#333]">Workflow file name</div>
                          <div className="flex items-start pl-[16px] mt-[8px]">
                            <div className="w-[247px] h-[22px] border-2 border-[#e0e0e0] pl-[5px] leading-[18px] text-[#555]">"Pr</div>
                            <div className="ml-[3px] w-[22px] h-[22px] bg-[#e6e6e6] border border-[#d0d0d0]" />
                            <div className="ml-[4px] w-[21px] h-[22px] bg-[#e6e6e6] border border-[#d0d0d0]" />
                          </div>
                          <div className="flex pl-[15px] mt-[10px] text-[#333]">
                            <div className="w-[109px] h-[22px] bg-[#e1e1e1] border-b border-r border-[#aaa] pl-[6px] leading-[20px] whitespace-nowrap">Import Arguments</div>
                            <div className="w-[24px] h-[22px] bg-[#e8eef4] text-center text-[#3a80d9] leading-[20px]">3</div>
                            <div className="ml-[10px] w-[110px] h-[22px] bg-[#e1e1e1] border-b border-r border-[#aaa] text-center leading-[20px]">Open Workflow</div>
                          </div>
                        </div>
                        <div className="mt-[6px]"><PlusC /></div>
                      </div>
                    </div>
                    <div className="mt-[99px] ml-[16px] w-[444px] border-t-2 border-[#e2e2e2]">
                      <div className="font-bold text-[#111] h-[24px] leading-[24px] pl-[1px]">Catches</div>
                      <div className="border-t-2 border-[#e2e2e2]" />
                    </div>
                  </div>
                </div>
              </div>
            </div>
            <div className="w-[16px] shrink-0 flex flex-col border-l border-[#ddd]">
              <div className="h-[16px] border border-[#ccc] flex items-center justify-center text-[#bbb] text-[7px] shrink-0">▲</div>
              <div className="h-[323px] border-x border-b-2 border-[#ccc] shrink-0" />
              <div className="mt-auto h-[16px] border border-[#ccc] flex items-center justify-center text-[#bbb] text-[7px] shrink-0">▼</div>
            </div>
            <div className="absolute left-[318px] top-[468px] w-[493px] h-[26px] bg-[#eff0f6] border border-[#666] shadow-[0_0_2px_#888] pl-[6px] leading-[24px] text-[#666] whitespace-nowrap">Synchronously invokes a specified workflow, optionally passing it a list of input arguments.</div>
          </div>
          <div className="mt-[4px] h-[22px] bg-[#f4f5f5] border-b border-[#e2e2e2] flex items-center pl-[6px] pr-[7px] text-[#444] shrink-0">
            <span>Variables</span><span className="ml-[17px]">Arguments</span><span className="ml-[17px]">Imports</span>
            <Hand className="ml-auto" size={15} fill="#333" strokeWidth={1} />
            <Search className="ml-[11px] -scale-x-100" size={14} strokeWidth={2} />
            <span className="ml-[10px] w-[62px]">100%</span>
            <span className="text-[8px] w-[20px]">▼</span>
            <svg width="14" height="14" viewBox="0 0 14 14" fill="#555"><rect x="3" y="3" width="8" height="8" fill="none" stroke="#555" /><path d="M0 0h4L0 4zM14 0v4L10 0zM0 14v-4l4 4zM14 14h-4l4-4z" /></svg>
            <svg className="ml-[12px]" width="14" height="14" viewBox="0 0 14 14"><rect width="14" height="14" fill="#999" /><rect x="2" y="2" width="10" height="10" fill="#ddd" /><rect x="5" y="5" width="4" height="4" fill="#777" /></svg>
          </div>
        </div>
        <div className="w-[33px] shrink-0 flex flex-col items-center pt-[8px]">
          <svg width="14" height="15" viewBox="0 0 14 15"><rect width="14" height="15" fill="#8a8a8a" /><rect x="1" y="8" width="6" height="6" fill="#e6553a" /><rect x="7" y="8" width="6" height="6" fill="#3a80d9" /></svg>
          <Vert t="Object Repository" cls="mt-[5px]" />
          <svg className="mt-[13px]" width="16" height="17" viewBox="0 0 16 17" fill="#444"><path d="M1 1c3-1 6 1 6 4l8 8-3 3-8-8C1 8-1 5 1 1z" /></svg>
          <Vert t="Properties" cls="mt-[5px]" />
          <svg className="mt-[13px]" width="14" height="13" viewBox="0 0 14 13" fill="#444"><rect width="3" height="3" /><rect x="11" width="3" height="3" /><rect x="5" y="4" width="4" height="3" /><path d="M1 3v10h1V3zM12 3v10h1V3z" /><rect x="6" y="8" width="2" height="5" /></svg>
          <Vert t="Outline" cls="mt-[10px]" />
        </div>
      </div>
      <div className="h-[23px] bg-[#c75e00] border-t border-[#d98a50] flex items-center justify-end text-white text-[12px] pr-[15px] shrink-0">
        <div className="w-[9px] h-[14px] bg-[#e6935c] mr-[3px]" />
        <ChevronDown size={9} strokeWidth={3} />
        <div className="ml-[18px] mr-[8px] w-[6px] h-[6px] rounded-full bg-[#a36a3c]" />
        <span className="w-[156px] whitespace-nowrap text-[#f6e6d8]">raul.martinez@ceiba.com.co...</span>
        <ChevronDown size={9} strokeWidth={3} />
        <Plus className="ml-[33px] text-[#e5a274]" size={15} strokeWidth={4} />
        <span className="ml-[3px] w-[121px] whitespace-nowrap">Add To Source Control</span>
        <ChevronDown size={9} strokeWidth={3} />
        <span className="ml-[15px] font-bold">VB</span>
      </div>
      <div className="h-[40px] bg-[#1a2a2e] flex shrink-0">
        <div className="w-[48px] flex items-center justify-center"><IWin s={16} /></div>
        <div className="w-[50px] flex items-center justify-center"><ITask s={16} /></div>
        {tiles.map((t) => (
          <div key={t.k} className={`relative w-[49px] flex items-center justify-center ${t.hot ? "bg-[#a05e2b]" : t.bg || ""}`}>
            <t.I s={23} />
            {t.bar && <div className={`absolute bottom-0 h-[2px] bg-[#76b9ed] ${t.bg ? "inset-x-0" : "inset-x-[5px]"}`} />}
            {t.hot && <div className="absolute inset-x-0 bottom-0 h-[2px] bg-[#ff6a00]" />}
          </div>
        ))}
        <div className="ml-auto mr-[7px] text-white text-[12px] leading-[17px] text-right pt-[2px]">
          <div>10:33 p. m.</div><div>9/09/2021</div>
        </div>
      </div>
    </div>
  );
}

export default function App() {
  return (
    <div className="w-[3520px] h-[1089px] bg-black flex overflow-hidden">
      <Browser />
      <Studio />
    </div>
  );
}
